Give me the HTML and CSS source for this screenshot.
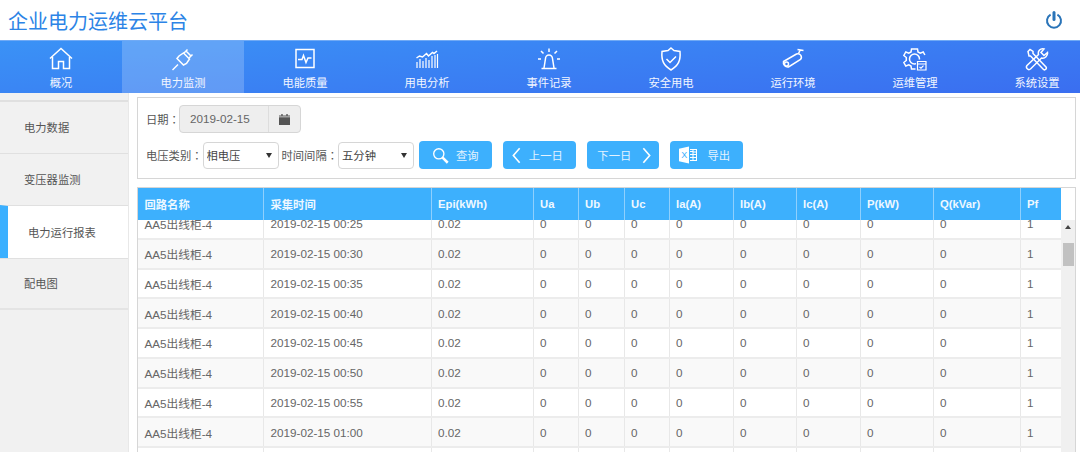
FILE: index.html
```html
<!DOCTYPE html>
<html>

<head>
    <meta charset="UTF-8">
    <title>企业电力运维云平台</title>
    <link rel="stylesheet" href="styles.css">
</head>

<body>
    <div class="top">
        <div class="brand">企业电力运维云平台</div>
        <svg class="power" viewBox="0 0 18 18"><path d="M5.600 3.600a7 7 0 1 0 6.800 0" /><path class="bar" d="M9 1.500v7" /></svg>
    </div>

    <div class="nav">
        <a class="nav-item">
            <svg viewBox="0 0 24 24"><path d="M1 11.500 12 1.500l11 10" /><path d="M3.500 10v11.500h6v-7h5v7h6V10" /></svg>
            <span>概况</span>
        </a>
        <a class="nav-item on">
            <svg viewBox="0 0 24 24"><path d="M1.500 23l5.500-5.500" /><path d="M6 11.500l6.500 6.500 3-1.500 3-4.500-6-6-4.500 3z" /><path d="M13 6l3.500-3.500M18 11l3.500-3.500M14.500 3.500l6 6" /></svg>
            <span>电力监测</span>
        </a>
        <a class="nav-item">
            <svg viewBox="0 0 24 24"><path d="M3 2.500h18v18H3z" /><path d="M5 12.500h4l1.500-4 2.500 7 2-4.500h3.500" /></svg>
            <span>电能质量</span>
        </a>
        <a class="nav-item">
            <svg viewBox="0 0 24 24"><path d="M1.500 11l3-2 3 1 4-3.500 2 2.500 4-3.500 1.500 1L22 4" /><path class="thin" d="M2 21v-6M5 21v-9M8 21v-7M11 21v-10M14 21v-8M17 21V9M20 21V8M22.500 21V7" /></svg>
            <span>用电分析</span>
        </a>
        <a class="nav-item">
            <svg viewBox="0 0 24 24"><path d="M4.500 21.500h15" /><path d="M7 21l1.500-9.500a3.500 3.500 0 0 1 7 0L17 21" /><path d="M12 1.500v3.500M4 4l2.500 2.500M20 4l-2.500 2.500M1 12h3M20 12h3" /></svg>
            <span>事件记录</span>
        </a>
        <a class="nav-item">
            <svg viewBox="0 0 24 24"><path d="M12 1l3 2.500 6 1c.800 9-1.500 14-9 18.500-7.500-4.500-9.800-9.500-9-18.500l6-1z" /><path d="M7.500 12l3.500 3.500 6-6" /></svg>
            <span>安全用电</span>
        </a>
        <a class="nav-item">
            <svg viewBox="0 0 24 24"><path d="M2.500 14.500l13-7.500a3.500 3.500 0 0 1 4 5.500l-12 7.500a4.500 4.500 0 0 1-5-5.500z" /><circle cx="5.500" cy="17" r="2" /><path d="M17.500 6.500l2-4M16.500 2.500l6 1" /></svg>
            <span>运行环境</span>
        </a>
        <a class="nav-item">
            <svg viewBox="0 0 24 24"><path d="M12.500 22H8.500L8 19l-2.200-1.200-3 1.200-2-3.500 2.500-2v-3L.800 8.500l2-3.500 3 1.200L8 5 8.500 2h6L15 5l2.200 1.200 3-1.200 1.700 3" /><circle cx="11.500" cy="12" r="5" /><path class="fill-blue" d="M13 12.500h11V24H13z" /><path class="cal" d="M14.500 14.500h8.500v8.500h-8.500zM14.500 17h8.500" /><path class="cal" d="M16.500 20l1.500 1.200 2.500-2.500" /></svg>
            <span>运维管理</span>
        </a>
        <a class="nav-item">
            <svg viewBox="0 0 24 24"><path d="M3 4.500l2-2 3 2v2l13 13.500a1.800 1.800 0 0 1-2.500 2.500L5.500 9H4z" /><path d="M22.500 5.500l-3.500 3-3-3 3-3.500c-3.500-1-6.500 2-5.500 5.500L2 18.500a2.500 2.500 0 0 0 3.500 3.500l11-11c3.500 1 6.500-2.500 6-5.500z" /></svg>
            <span>系统设置</span>
        </a>
    </div>

    <div class="main">
        <div class="side">
            <a class="side-item">电力数据</a>
            <a class="side-item">变压器监测</a>
            <a class="side-item on">电力运行报表</a>
            <a class="side-item">配电图</a>
        </div>

        <div class="content">
            <div class="filter">
                <div class="row date-row">
                    <label>日期<span class="colon">：</span></label>
                    <div class="date-box">
                        <span class="date-val">2019-02-15</span>
                        <span class="date-btn">
                            <svg viewBox="0 0 12 12"><path d="M0 3.500h12V12H0zM0 1.500h12v1.300H0zM2.500 0h1.500v1.500H2.500zM8 0h1.500v1.500H8z" /></svg>
                        </span>
                    </div>
                </div>
                <div class="row">
                    <label>电压类别<span class="colon">：</span></label>
                    <div class="sel"><select><option>相电压</option></select></div>
                    <label class="lbl2">时间间隔<span class="colon">：</span></label>
                    <div class="sel"><select><option>五分钟</option></select></div>
                    <button class="btn first">
                        <svg class="ic-search" viewBox="0 0 20 20"><circle cx="8" cy="8" r="6" /><path class="handle" d="M12.500 12.500l6 6" /></svg>
                        <span>查询</span>
                    </button>
                    <button class="btn prev">
                        <svg class="ic-chev" viewBox="0 0 10 18"><path d="M8.500 1 1.500 9l7 8" /></svg>
                        <span>上一日</span>
                    </button>
                    <button class="btn next">
                        <span>下一日</span>
                        <svg class="ic-chev" viewBox="0 0 10 18"><path d="M1.500 1l7 8-7 8" /></svg>
                    </button>
                    <button class="btn export">
                        <svg class="ic-xls" viewBox="0 0 18 18"><path class="solid" d="M0 2.800 10 .5v17L0 15.200z" /><path class="solid" d="M11 3h7v12h-7v-1h2.500v-2H11v-1h2.500V9H11V8h2.500V6H11V5h2.500V4H11zm3.500 1v1.500H17V4zm0 2.500V8H17V6.500zm0 2.500v2H17V9zm0 3v2H17v-2z" /><text x="2.300" y="12" class="xls-x">X</text></svg>
                        <span>导出</span>
                    </button>
                </div>
            </div>

            <div class="grid">
                <div class="grid-head">
                    <table>
                        <colgroup>
                            <col class="c1"><col class="c2"><col class="c3"><col class="c4"><col class="c5"><col class="c6"><col class="c7"><col class="c8"><col class="c9"><col class="c10"><col class="c11"><col class="c12">
                        </colgroup>
                        <tr><th>回路名称</th><th>采集时间</th><th>Epi(kWh)</th><th>Ua</th><th>Ub</th><th>Uc</th><th>Ia(A)</th><th>Ib(A)</th><th>Ic(A)</th><th>P(kW)</th><th>Q(kVar)</th><th>Pf</th></tr>
                    </table>
                </div>
                <div class="grid-body">
                    <div class="rows">
                        <table>
                            <colgroup>
                                <col class="c1"><col class="c2"><col class="c3"><col class="c4"><col class="c5"><col class="c6"><col class="c7"><col class="c8"><col class="c9"><col class="c10"><col class="c11"><col class="c12">
                            </colgroup>
                            <tr><td>AA5出线柜-4</td><td>2019-02-15 00:25</td><td>0.02</td><td>0</td><td>0</td><td>0</td><td>0</td><td>0</td><td>0</td><td>0</td><td>0</td><td>1</td></tr>
                            <tr><td>AA5出线柜-4</td><td>2019-02-15 00:30</td><td>0.02</td><td>0</td><td>0</td><td>0</td><td>0</td><td>0</td><td>0</td><td>0</td><td>0</td><td>1</td></tr>
                            <tr><td>AA5出线柜-4</td><td>2019-02-15 00:35</td><td>0.02</td><td>0</td><td>0</td><td>0</td><td>0</td><td>0</td><td>0</td><td>0</td><td>0</td><td>1</td></tr>
                            <tr><td>AA5出线柜-4</td><td>2019-02-15 00:40</td><td>0.02</td><td>0</td><td>0</td><td>0</td><td>0</td><td>0</td><td>0</td><td>0</td><td>0</td><td>1</td></tr>
                            <tr><td>AA5出线柜-4</td><td>2019-02-15 00:45</td><td>0.02</td><td>0</td><td>0</td><td>0</td><td>0</td><td>0</td><td>0</td><td>0</td><td>0</td><td>1</td></tr>
                            <tr><td>AA5出线柜-4</td><td>2019-02-15 00:50</td><td>0.02</td><td>0</td><td>0</td><td>0</td><td>0</td><td>0</td><td>0</td><td>0</td><td>0</td><td>1</td></tr>
                            <tr><td>AA5出线柜-4</td><td>2019-02-15 00:55</td><td>0.02</td><td>0</td><td>0</td><td>0</td><td>0</td><td>0</td><td>0</td><td>0</td><td>0</td><td>1</td></tr>
                            <tr><td>AA5出线柜-4</td><td>2019-02-15 01:00</td><td>0.02</td><td>0</td><td>0</td><td>0</td><td>0</td><td>0</td><td>0</td><td>0</td><td>0</td><td>1</td></tr>
                            <tr><td></td><td></td><td></td><td></td><td></td><td></td><td></td><td></td><td></td><td></td><td></td><td></td></tr>
                        </table>
                    </div>
                    <div class="scrollbar">
                        <div class="arrow"></div>
                        <div class="thumb"></div>
                    </div>
                </div>
            </div>
        </div>
    </div>
</body>

</html>
```

FILE: styles.css
```css
* {
    box-sizing: border-box;
}

html, body {
    height: 100%;
}

body {
    margin: 0;
    height: 452px;
    overflow: hidden;
    background-color: #fff;
    font-family: "Liberation Sans", "Noto Sans CJK SC", sans-serif;
    font-size: 11.5px;
    color: #555;
}

/* header */
.top {
    height: 40px;
    display: flex;
    align-items: center;
    justify-content: space-between;
    padding: 0 17px 0 8px;
}

.brand {
    font-size: 20px;
    color: #2c84e6;
}

.power {
    width: 18px;
    height: 18px;
    fill: none;
    stroke: #2a74b8;
    stroke-width: 2;
}

.power .bar {
    stroke-width: 3;
    stroke-linecap: round;
}

/* nav */
.nav {
    height: 53px;
    display: flex;
    overflow: hidden;
    border-top: 1px solid #70aaf5;
    background: linear-gradient(175deg, #3a92f6, #3a6ef0);
}

.nav-item {
    flex: 0 0 122px;
    display: flex;
    flex-direction: column;
    align-items: center;
    padding-top: 6px;
    color: #f2f6ff;
    font-size: 11.3px;
}

.nav-item.on {
    background-color: rgba(255, 255, 255, 0.2);
}

.nav-item svg {
    width: 24px;
    height: 24px;
    fill: none;
    stroke: #fff;
    stroke-width: 1.5;
    margin-bottom: 5px;
}

.nav-item span {
    line-height: 14px;
}

.nav-item svg .thin {
    stroke-width: 1.2;
}

.nav-item svg .fill-blue {
    fill: #3a78f2;
    stroke: none;
}

.nav-item svg .cal {
    stroke-width: 1.2;
}

/* side menu */
.main {
    display: flex;
    height: 359px;
}

.side {
    width: 129px;
    flex-shrink: 0;
    padding-top: 7px;
    background-color: #f1f1f1;
    border-right: 1px solid #e8e8e8;
}

.side-item {
    display: flex;
    align-items: center;
    height: 52.5px;
    padding-left: 24px;
    font-size: 11.3px;
    color: #555;
    border-top: 1px solid #e0e0e0;
}

.side-item:first-child {
    border-top-width: 2px;
}

.side-item:last-child {
    border-bottom: 2px solid #e4e4e4;
}

.side-item.on {
    padding-left: 20px;
    background-color: #fff;
    border-left: 8px solid #3bb0ff;
}

/* content */
.content {
    flex: 1;
    min-width: 0;
    padding: 4px 4px 0 8px;
}

.filter {
    height: 82px;
    margin-bottom: 8px;
    padding: 7px 0 0 8px;
    border: 1px solid #d6d6d6;
    background-color: #fff;
}

.row {
    display: flex;
    align-items: center;
}

.date-row {
    height: 28px;
    margin-bottom: 8px;
}

.row label {
    font-size: 11.3px;
    color: #555;
    white-space: nowrap;
}

/* colon sits in the middle of its cell in the original */
.colon {
    font-family: "Noto Sans CJK TC", sans-serif;
}

.date-row label {
    width: 33px;
}

.date-box {
    width: 122px;
    height: 28px;
    display: flex;
    border: 1px solid #d6d6d6;
    border-radius: 4px;
    background-color: #eee;
}

.date-val {
    flex: 1;
    line-height: 26px;
    padding-left: 10px;
    font-size: 11.7px;
    color: #666;
    border-right: 1px solid #ddd;
}

.date-btn {
    width: 31px;
    padding-right: 1px;
    display: flex;
    align-items: center;
    justify-content: center;
}

.date-btn svg {
    width: 11px;
    height: 11px;
    fill: #555;
}

.sel {
    position: relative;
    width: 76px;
    height: 27px;
}

.sel::after {
    content: "";
    position: absolute;
    right: 7px;
    top: 11px;
    border: 3.500px solid transparent;
    border-top: 5px solid #333;
    border-bottom: 0;
}

.sel select {
    width: 100%;
    height: 100%;
    appearance: none;
    padding: 1px 0 0 3px;
    border: 1px solid #d6d6d6;
    border-radius: 4px;
    background-color: #fff;
    font-family: inherit;
    font-size: 11.3px;
    color: #444;
}

.row .lbl2 {
    margin-left: 3px;
}

.btn {
    width: 72.500px;
    height: 28px;
    display: flex;
    align-items: center;
    justify-content: center;
    border: 0;
    border-radius: 4px;
    padding: 0;
    background-color: #3db0fd;
    color: #e4f3ff;
    font-family: inherit;
    font-size: 11.3px;
}

.btn.first {
    margin-left: 5px;
}

.btn.prev {
    margin-left: 11.500px;
    padding-right: 4px;
    gap: 8px;
}

.btn.next {
    margin-left: 11px;
    padding-left: 3px;
    gap: 11px;
}

.btn.export {
    margin-left: 11px;
    padding-right: 3px;
}

.ic-search {
    width: 17px;
    height: 17px;
    margin-right: 7px;
    fill: none;
    stroke: #fff;
    stroke-width: 1.6;
}

.ic-search .handle {
    stroke-width: 3;
}

.ic-chev {
    width: 9px;
    height: 17px;
    fill: none;
    stroke: #fff;
    stroke-width: 1.8;
}

.ic-xls {
    width: 18px;
    height: 18px;
    margin-right: 10px;
}

.ic-xls .solid {
    fill: #fff;
    fill-rule: evenodd;
}

.xls-x {
    font-size: 9px;
    fill: #3db0fd;
}

/* table */
.grid {
    height: 266px;
    border: 1px solid #d6d6d6;
    border-bottom: 0;
    overflow: hidden;
}

.grid table {
    width: 923px;
    table-layout: fixed;
    border-collapse: collapse;
}

.c1 { width: 125.500px; }
.c2 { width: 167.500px; }
.c3 { width: 102px; }
.c4 { width: 45px; }
.c5 { width: 46px; }
.c6 { width: 45px; }
.c7 { width: 64px; }
.c8 { width: 63px; }
.c9 { width: 64px; }
.c10 { width: 73px; }
.c11 { width: 87px; }
.c12 { width: 41px; }

.grid-head {
    height: 32px;
}

.grid-head th {
    height: 32px;
    padding: 0 0 0 6.500px;
    text-align: left;
    font-size: 11.3px;
    font-weight: bold;
    color: #eef8ff;
    background-color: #3db0fd;
    border-left: 1px solid #8fd0fd;
}

.grid-head th:first-child {
    border-left: 0;
}

.grid-body {
    display: flex;
    height: 233px;
    overflow: hidden;
}

.rows {
    width: 923px;
    margin-top: -11px;
}

.rows tr {
    height: 29.750px;
}

.rows tr:nth-child(even) td {
    background-color: #f9f9f9;
}

.rows td {
    padding: 0 0 0 6.500px;
    font-size: 11.7px;
    color: #666;
    border-left: 1px solid #e8e8e8;
    border-bottom: 2px solid #ececec;
    white-space: nowrap;
}

.rows td:first-child {
    border-left: 0;
}

.scrollbar {
    width: 14px;
    background-color: #f0f0f0;
}

.arrow {
    width: 0;
    margin: 5px auto 14px;
    border: 3.500px solid transparent;
    border-bottom: 4px solid #444;
    border-top: 0;
}

.thumb {
    width: 11px;
    height: 23px;
    margin: 0 auto;
    background-color: #c1c1c1;
}
```
